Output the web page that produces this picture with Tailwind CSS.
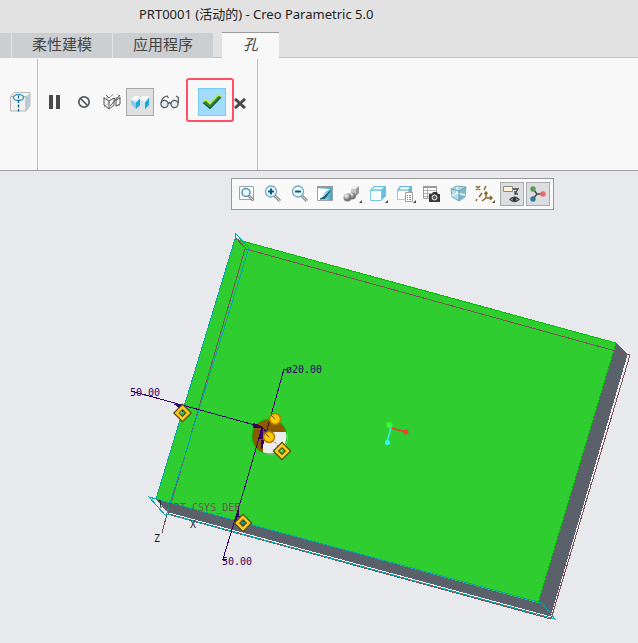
<!DOCTYPE html>
<html lang="zh-CN">
<head>
    <meta charset="UTF-8">
    <meta name="viewport" content="width=device-width, initial-scale=1.0">
    <title>PRT0001 (活动的) - Creo Parametric 5.0</title>
    <script src="https://cdn.jsdelivr.net/npm/@tailwindcss/browser@4"></script>
</head>
<body class="flex h-screen flex-col overflow-hidden bg-[#e8e9ed] font-['Noto_Sans','Noto_Sans_CJK_SC',sans-serif] text-[#222]">

<header class="bg-[#e2e2e2]">
    <h1 class="h-8 pt-1 pl-[139px] text-[13px] leading-5 whitespace-nowrap">PRT0001 (活动的) - Creo Parametric 5.0</h1>
    <nav class="flex h-[26px] items-stretch text-[15px] leading-5 text-[#444]">
        <div class="mt-px mr-px w-[11px] bg-[#cbcfd2]"></div>
        <button class="mt-px mr-px w-[100px] bg-[#cbcfd2] pb-1">柔性建模</button>
        <button class="mt-px w-[100px] bg-[#cbcfd2] pb-1">应用程序</button>
        <div class="w-[9px] border-b border-[#c4c4c4]"></div>
        <button class="w-[57px] border-t border-[#999] bg-[#f8f8f8] pb-1 italic">孔</button>
        <div class="grow border-b border-[#c4c4c4]"></div>
    </nav>
</header>

<!-- Ribbon -->
<section class="flex h-[113px] shrink-0 border-b border-[#a0a0a0] bg-[#f8f8f8]">
    <div class="mt-px w-[38px] border-r border-[#bfbfbf] pt-[29px] pl-[6px]">
        <button class="flex h-7 w-7 items-center justify-center" aria-label="孔">
            <svg width="22" height="22" viewBox="0 0 22 22">
                <path d="M1.5 5.5 5 1.5h16v13L17 20" fill="#f3f3f3" stroke="#b9b9b9"/>
                <path d="M17 5.5 21 2v13l-4 5z" fill="#b7cdd8"/>
                <path d="M1.5 5.5h15.5v14.5H1.5z" fill="#f0f0f0" stroke="#b5b5b5"/>
                <ellipse cx="9.500" cy="6.500" rx="5" ry="3" fill="#fff" stroke="#3899bd" stroke-width="1.500"/>
                <path d="M9.500 4.500v16" stroke="#14617e" stroke-width="1.300" stroke-dasharray="3 1.500"/>
            </svg>
        </button>
    </div>
    <div class="mt-px flex w-[220px] items-start border-r border-[#bfbfbf] pt-[19px] pl-[2px]">
        <div class="flex items-center pt-[10px]">
            <button class="flex h-7 w-[30px] items-center justify-center" aria-label="暂停">
                <svg width="12" height="14" viewBox="0 0 12 14"><path d="M0 0h4v14H0zM7 0h4v14H7z" fill="#4a4a4a"/></svg>
            </button>
            <button class="flex h-7 w-7 items-center justify-center" aria-label="无预览">
                <svg width="14" height="14" viewBox="0 0 14 14" fill="none" stroke="#55585b" stroke-width="1.700"><circle cx="7" cy="7" r="5.200"/><path d="m3.500 3.500 7 7"/></svg>
            </button>
            <button class="flex h-7 w-7 items-center justify-center" aria-label="分离">
                <svg width="20" height="18" viewBox="0 0 20 18" fill="none">
                    <path d="M1 5h6l5-4M7 5l4-4M13 5h6l-4-4M2 14 8 9M13 13l6-1" stroke="#999" stroke-dasharray="2 1"/>
                    <path d="m2 5 5 3 5-3 2 2 4-2M2 5v7l5 4V8M7 16l5-4V5M14 7v6l4-2V5M8 13 18 2M4 2l3 3" stroke="#555" stroke-width="1"/>
                </svg>
            </button>
            <button class="flex h-7 w-7 items-center justify-center border border-[#a9a9a9] bg-[#dfe0e2]" aria-label="连接">
                <svg width="20" height="15" viewBox="0 0 20 15">
                    <path d="m1 4 4-3h5L6 5zM10 4l3-3h6l-4 4z" fill="#fff"/>
                    <path d="m1 4 5 3v7L1 9z" fill="#86cdea"/>
                    <path d="m6 7 4-4v7l-4 4zM15 7l4-5v8l-4 4z" fill="#1fa4dc"/>
                    <path d="m11 4 4 3v7l-4-4z" fill="#c5e8f5"/>
                    <path d="m1 4 5 3 4-4M11 4l4 3 4-5" fill="none" stroke="#f7fcff"/>
                </svg>
            </button>
            <button class="flex h-7 w-8 items-center justify-center" aria-label="预览">
                <svg width="20" height="14" viewBox="0 0 20 14" fill="none" stroke="#4c5658" stroke-width="1.200">
                    <circle cx="4.500" cy="9" r="3.600" fill="#e3eced"/><circle cx="14.500" cy="9" r="3.600" fill="#e3eced"/>
                    <path d="M8 8.500q1.500-1.500 3 0M1 8q1-6 6-7l1.500 2M18.300 8V2.500L16 1"/>
                </svg>
            </button>
        </div>
        <div class="h-11 w-12 rounded-[3px] border-2 border-[#ff5065] pt-2 pl-[10px]">
            <button class="flex h-7 w-7 items-center justify-center border border-[#78c8f8] bg-[#a1dcff]" aria-label="确定">
                <svg width="20" height="16" viewBox="0 0 20 16"><path d="m1 8 3-2 4 4 8.500-9L19 3 8 15z" fill="#2d8a4c"/><path d="m1 8.500 7 6L19 3" fill="none" stroke="#1d4f33" stroke-width="1.200"/><path d="m1 8 3-2 4 4 8.500-9L19 2.500" fill="none" stroke="#d2e800" stroke-width="1.200"/></svg>
            </button>
        </div>
        <button class="mt-[10px] flex h-7 w-3 items-center justify-center pt-[2px]" aria-label="取消">
            <svg width="12" height="11" viewBox="0 0 12 11"><path d="m1 1 10 9M11 1 1 10" stroke="#4a4a4a" stroke-width="3"/></svg>
        </button>
    </div>
</section>

<main class="relative grow">
    <!-- Model view -->
    <svg class="absolute inset-0 h-full w-full font-['DejaVu_Sans_Mono',monospace] text-[10px]" viewBox="0 171 638 472" preserveAspectRatio="xMinYMin meet">
        <g shape-rendering="crispEdges">
            <path d="M616 343 628 355 552 618 538 603zM156 499l13 15 383 104-14-15z" fill="#5a616b"/>
            <path d="M235 239 616 343 538 603 156 499z" fill="#2fcd2f"/>
            <g fill="none">
                <path d="M235 239 616 343 538 603" stroke="#08bd08"/>
                <path d="m169 513 382 104L628 355" stroke="#f3f3f3"/>
                <path d="m235 237 11 12 384 106-79 264-384-105-5 19M245 249l-77 265" stroke="#7d5055"/>
                <path d="M235 239v-6l14 15-83 268-17-19 7 2 79-260M156 499l386 104 13 16-387-105" stroke="#06a3a8"/>
            </g>
        </g>

        <!-- Hole -->
        <circle cx="269.500" cy="436.500" r="17.500" fill="#8b5a00"/>
        <path d="M271 432h16a17.500 17.500 0 0 1-24 21v-12z" fill="#ededed"/>
        <circle cx="269.500" cy="436.500" r="17.500" fill="none" stroke="#08bd08"/>

        <text x="168" y="511" fill="#6f5552">PRT_CSYS_DEF</text>
        <text x="154" y="542" fill="#222">Z</text>
        <text x="190" y="528" fill="#222">X</text>
        <path d="m158 502 2-2 1 8" fill="none" stroke="#222"/>

        <!-- Dimensions -->
        <g fill="none" stroke="#330066" shape-rendering="crispEdges">
            <path d="m131 391 131 36 7 8M287 369h-3l-22 79M262 427l-15 53-24 79h4M176 405l7 7M238 515l6 7"/>
            <path d="m174 404 9 1-1 3zM253 423l9 4-9 0zM259 439l3-11 1 10zM235 521l3-11 1 5zM269 422l3-9-1 10zM261 449l0-9 3 1z" fill="#330066"/>
        </g>
        <path d="m269 436 13 14" stroke="#b33a62" stroke-dasharray="2 2"/>
        <g fill="#330066">
            <text x="130" y="396">50.00</text>
            <text x="286" y="373">ø20.00</text>
            <text x="222" y="565">50.00</text>
        </g>

        <!-- Drag handles -->
        <g fill="#ffc800" stroke="#b27a00" stroke-width="1.500">
            <circle cx="275" cy="419" r="5.500"/><circle cx="269" cy="437" r="5.500"/>
        </g>
        <path d="m271 415 4 4M265 433l4 4" stroke="#654000"/>
        <g fill="none" stroke="#504a16" stroke-width="5">
            <path d="m182.500 407 6 6-6 6-6-6zM243 517l6 6-6 6-6-6zM282 445l6 6-6 6-6-6z"/>
            <path d="m182.500 407 6 6-6 6-6-6zM243 517l6 6-6 6-6-6zM282 445l6 6-6 6-6-6z" stroke="#ffca1b" stroke-width="2.500"/>
        </g>

        <!-- Spin center -->
        <path d="m391 428 15 4" stroke="#ff3030" stroke-width="1.500"/>
        <path d="m391 428-4 14" stroke="#35f5e8" stroke-width="1.500"/>
        <circle cx="389.500" cy="425" r="3" fill="#38ff38"/>
        <circle cx="406" cy="432" r="2.500" fill="#ff3838"/>
        <circle cx="387.500" cy="442.500" r="2.500" fill="#38f5ff"/>
    </svg>

    <!-- Graphics toolbar -->
    <div class="relative mt-[7px] ml-[231px] flex h-8 w-[323px] items-center justify-between border border-[#989898] bg-[#f9f9f9] px-[3px]">
        <button class="flex size-6 items-center justify-center" aria-label="重新调整">
            <svg width="20" height="20" viewBox="0 0 20 20"><path d="M2.500 2.500h14v13h-14z" fill="#fff" stroke="#9da4a8"/><path d="m11.500 11.500 5 5" stroke="#8a8a8a" stroke-width="3"/><path d="m12 12 4 4" stroke="#ddd"/><circle cx="9" cy="8.500" r="4" fill="#edf8fd" stroke="#4792ae" stroke-width="1.500"/></svg>
        </button>
        <button class="flex size-6 items-center justify-center" aria-label="放大">
            <svg width="20" height="20" viewBox="0 0 20 20"><path d="m11 11 6 6" stroke="#8a8a8a" stroke-width="3"/><path d="m12 12 5 5" stroke="#ddd"/><circle cx="8" cy="7.500" r="5.500" fill="#f3fbff" stroke="#65a7bf" stroke-width="1.300"/><path d="M5 7.500h6M8 4.500v6" stroke="#075d83" stroke-width="2"/></svg>
        </button>
        <button class="flex size-6 items-center justify-center" aria-label="缩小">
            <svg width="20" height="20" viewBox="0 0 20 20"><path d="m11 11 6 6" stroke="#8a8a8a" stroke-width="3"/><path d="m12 12 5 5" stroke="#ddd"/><circle cx="8" cy="7.500" r="5.500" fill="#f3fbff" stroke="#65a7bf" stroke-width="1.300"/><path d="M5 7.500h6" stroke="#075d83" stroke-width="2"/></svg>
        </button>
        <button class="flex size-6 items-center justify-center" aria-label="重画">
            <svg width="20" height="20" viewBox="0 0 20 20">
                <defs><linearGradient id="repaint"><stop stop-color="#eafaff"/><stop offset="1" stop-color="#3ba2c0"/></linearGradient></defs>
                <path d="M1.500 2.500h15v14h-15z" fill="url(#repaint)" stroke="#9da4a8"/><path d="M2 5h12Q8 7 5 16H2z" fill="#fff"/><path d="M1 3h16" stroke="#92999d" stroke-width="2"/><path d="m14 7-6 6-4 2 5-.5z" fill="#155f78" stroke="#155f78"/>
            </svg>
        </button>
        <button class="flex size-6 items-center justify-center" aria-label="渲染选项">
            <svg width="22" height="20" viewBox="0 0 22 20">
                <defs><radialGradient id="ball" cx=".35" cy=".3"><stop stop-color="#fff"/><stop offset="1" stop-color="#777"/></radialGradient></defs>
                <path d="m9 5 3-3h5v7l-4 4H9z" fill="#c4c4c4"/><path d="m9 5 3-3h5l-3 3z" fill="#eee"/><path d="m14 5 3-3v7l-3 3z" fill="#999"/><ellipse cx="10" cy="12" rx="4" ry="3.500" fill="url(#ball)"/><circle cx="5.500" cy="13.500" r="4" fill="url(#ball)"/><path d="M20 16v3h-3z" fill="#444"/>
            </svg>
        </button>
        <button class="flex size-6 items-center justify-center" aria-label="显示样式">
            <svg width="22" height="20" viewBox="0 0 22 20"><path d="m2 6 4-4h12v10l-4 4H2z" fill="#65c1df"/><path d="m4 5.500 2.500-2.500H16l-2.500 2.500z" fill="#e7f8fe"/><path d="M2.500 6.500h11v10h-11z" fill="#f6fcff" stroke="#7fc8e0"/><path d="M20 16v3h-3z" fill="#444"/></svg>
        </button>
        <button class="flex size-6 items-center justify-center" aria-label="已保存方向">
            <svg width="22" height="20" viewBox="0 0 22 20"><path d="m2 6 3-4h12v8l-4 5H2z" fill="#65b5d0"/><path d="m4 5.500 2-2.500h9l-2 2.500z" fill="#e7f8fe"/><path d="M2.500 6.500h11v9h-11z" fill="#fff" stroke="#9dcbdc"/><path d="M10.500 8.500h7v9h-7z" fill="#fff" stroke="#a0a0a0"/><path d="M12 11.500h4M12 13.500h4M12 15.500h4" stroke="#888" stroke-dasharray="1 1 3"/><path d="M21 16v3h-3z" fill="#444"/></svg>
        </button>
        <button class="flex size-6 items-center justify-center" aria-label="视图管理器">
            <svg width="20" height="20" viewBox="0 0 20 20"><path d="M1.500 2.500h13v12h-13z" fill="#fff" stroke="#999"/><path d="M1 3h14" stroke="#999" stroke-width="2"/><path d="M2 6.500h12M2 9.500h12M2 12.500h12M5.500 3v11" stroke="#b0b0b0"/><path d="M7 10h3l1-2h4l1 2h2v8H7z" fill="#383838"/><circle cx="12.500" cy="13.500" r="2.500" fill="#666" stroke="#eee"/></svg>
        </button>
        <button class="flex size-6 items-center justify-center" aria-label="透视图">
            <svg width="20" height="20" viewBox="0 0 20 20"><path d="m2 5 6-3 9 1-1 10-6 4-7-4z" fill="#b4d9e7" stroke="#79a9bb"/><path d="m10 7 7-4-1 10-6 4z" fill="#7eb8cd"/><path d="m3 12 5-3 8 2M8 9V3" fill="none" stroke="#e7f7fc" stroke-width="1.500"/><path d="m2.500 5 7.500 2 7-4M10 7v10" fill="none" stroke="#5f9db3"/></svg>
        </button>
        <button class="flex size-6 items-center justify-center" aria-label="基准显示过滤器">
            <svg width="22" height="20" viewBox="0 0 22 20" fill="none"><path d="m2 2 4 4m0-4L2 6M12 2l-2 4M8 9l-3 4m-2 2-1 2M12 8v6h6M12 14l-4 3M10.500 10 12 8l1.500 2M16 12l2 2-2 2" stroke="#8a6827" stroke-width="1.500"/><path d="M21 16v3h-3z" fill="#444"/></svg>
        </button>
        <button class="flex size-6 items-center justify-center border border-[#aaa] bg-[#dcdde0]" aria-label="注释显示">
            <svg width="20" height="20" viewBox="0 0 20 20"><path d="M1.500 2.500h9v5h-9z" fill="#fff2d4" stroke="#888"/><path d="M11 5h5l-3 5m0-3v3h3" fill="none" stroke="#444" stroke-width="1.300"/><path d="M8 15.500q4.500-4.500 9 0-4.500 4-9 0z" fill="#fff" stroke="#444" stroke-width="1.300"/><circle cx="12.500" cy="15.300" r="2" fill="#333"/></svg>
        </button>
        <button class="flex size-6 items-center justify-center border border-[#aaa] bg-[#dcdde0]" aria-label="旋转中心">
            <svg width="20" height="20" viewBox="0 0 20 20"><path d="m5 5 4 5-4 5M9 10h6" fill="none" stroke="#444" stroke-width="1.400"/><circle cx="5" cy="5" r="2.700" fill="#5b9c55"/><circle cx="15" cy="10" r="2.700" fill="#e56b68"/><circle cx="5" cy="15" r="2.700" fill="#36799d"/></svg>
        </button>
    </div>
</main>

</body>
</html>
